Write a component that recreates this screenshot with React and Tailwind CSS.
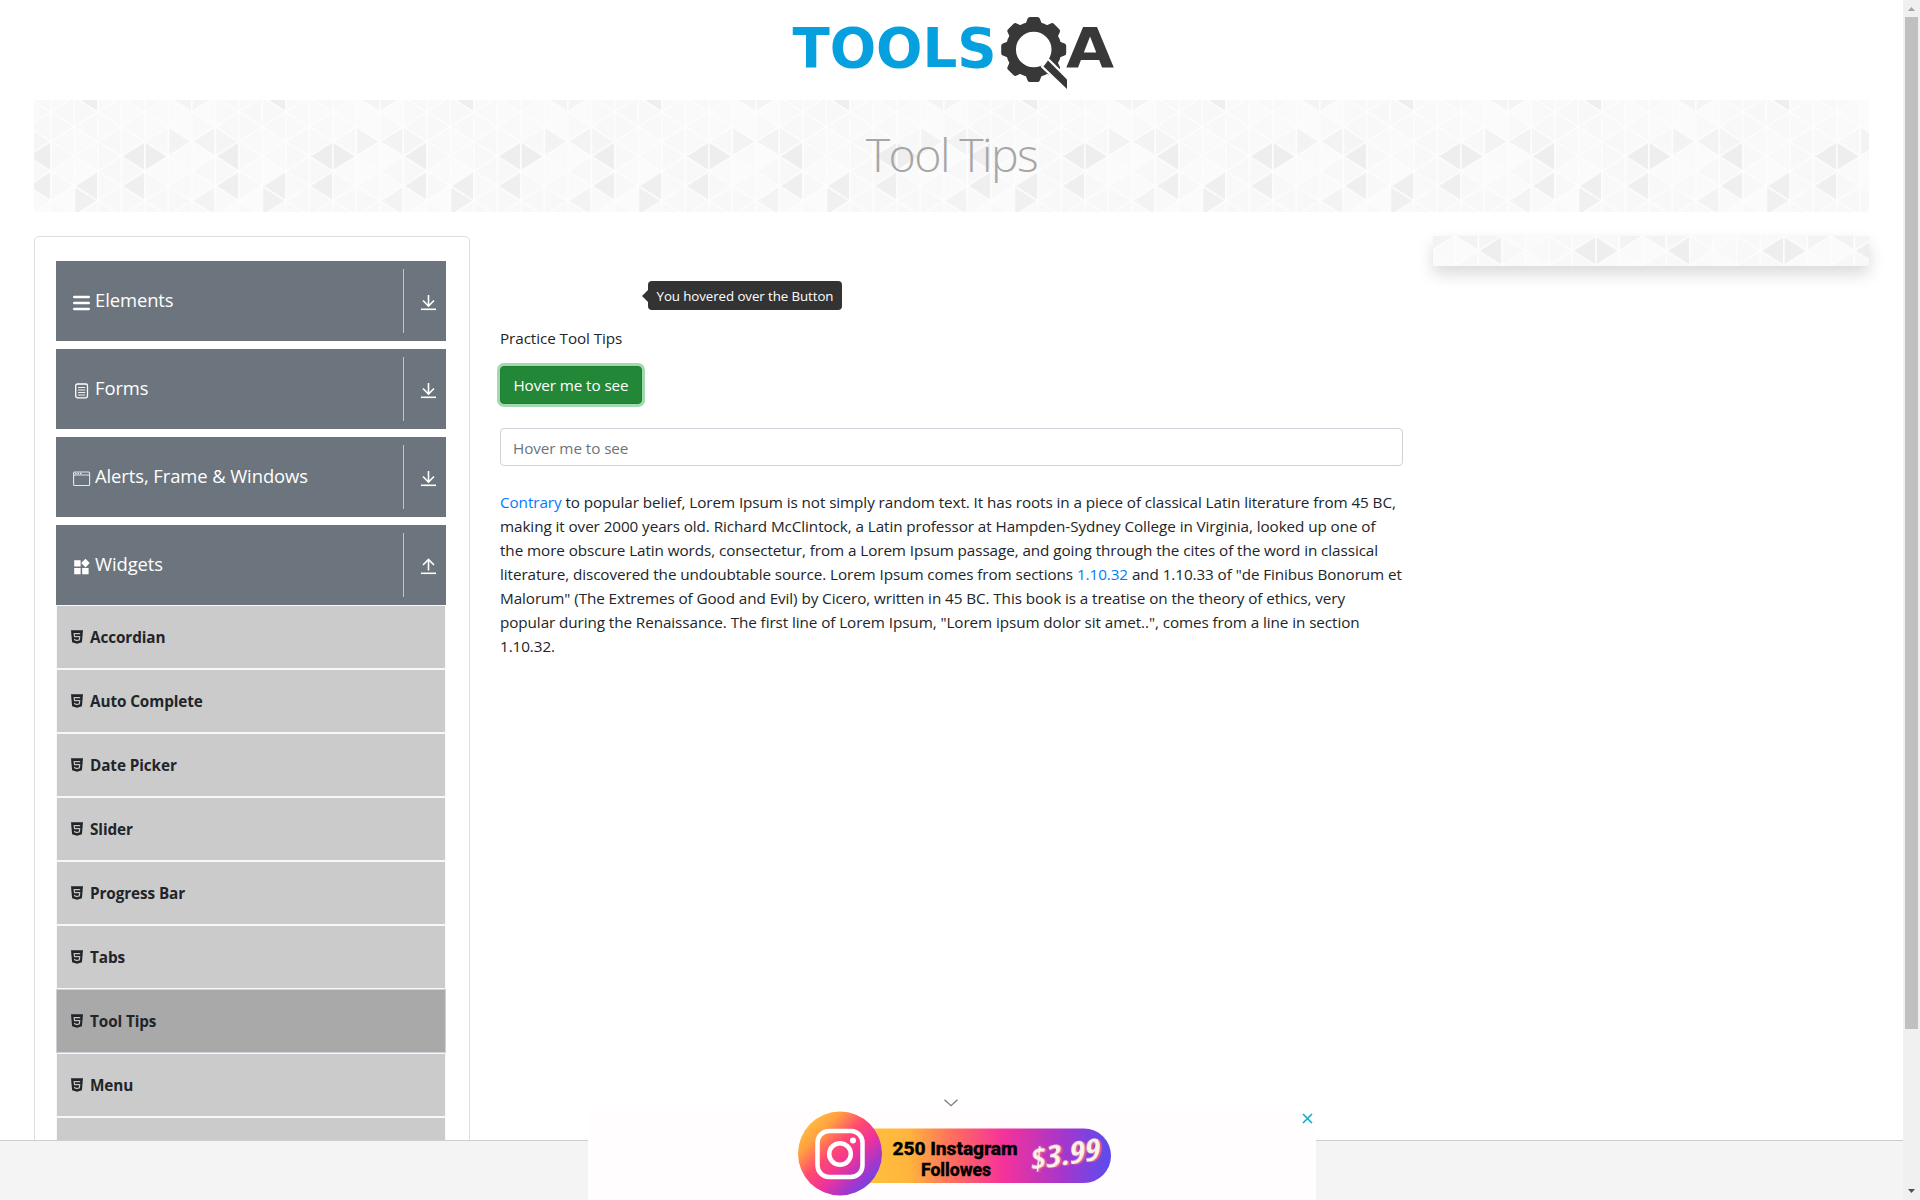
import React from "react";

const STEP = 23.5;
const HALF = 14.83;

// Darker triangles of the backdrop: [base column, centre y, pointing side, fill]
const DARK = [
  [0, 56.3, "L", "#eeeeee"], [4, 56.3, "L", "#eeeeee"], [4, 56.3, "R", "#eeeeee"],
  [0, 86, "L", "#efefef"], [2, 86, "L", "#efefef"], [4, 86, "L", "#efefef"],
  [1, 100.8, "R", "#f0f0f0"], [2, -3, "L", "#eeeeee"], [5, 41.5, "R", "#f3f3f3"],
  [7, 41.5, "L", "#f3f3f3"], [7, 41.5, "R", "#f5f5f5"], [7, 100.8, "L", "#f3f3f3"],
  [6, -3, "L", "#f4f4f4"], [6, -3, "R", "#f4f4f4"],
];
const SOFT = ["#f8f8f8", "#fafafa", "#f9f9f9", "#f8f8f8", "#f9f9f9", "#fbfbfb", "#f8f8f8"];

function buildTriangles() {
  const list = [];
  for (let c = -1; c <= 8; c++) {
    for (let r = -1; r < 5; r++) {
      const col = (c + 8) % 8;
      const cy = (col % 2 ? 11.8 : 26.7) + r * HALF * 2;
      const x = 16.9 + c * STEP;
      for (const side of ["L", "R"]) {
        const hit = DARK.find((d) => d[0] === col && Math.abs(d[1] - cy) < 5 && d[2] === side);
        const soft = SOFT[(col * 5 + (r + 1) * 3 + (side === "L" ? 0 : 4) + ((col * (r + 2)) % 3)) % SOFT.length];
        const tip = side === "L" ? x - STEP : x + STEP;
        list.push({
          key: c + "," + r + side,
          points: `${x},${cy - HALF} ${x},${cy + HALF} ${tip},${cy}`,
          fill: hit ? hit[3] : soft,
        });
      }
    }
  }
  return list;
}
const TRIANGLES = buildTriangles();

function Backdrop({ id, dx, dy }) {
  return (
    <svg className="absolute inset-0 h-full w-full" aria-hidden="true">
      <defs>
        <pattern id={id} width="188" height="118.64" patternUnits="userSpaceOnUse" patternTransform={`translate(${dx} ${dy})`}>
          <rect width="188" height="119" fill="#f9f9f9" />
          {TRIANGLES.map((t) => (
            <polygon key={t.key} points={t.points} fill={t.fill} stroke="#fdfdfd" strokeWidth="1.600" />
          ))}
        </pattern>
      </defs>
      <rect width="100%" height="100%" fill={`url(#${id})`} />
    </svg>
  );
}

function Logo() {
  return (
    <svg width="330" height="84" viewBox="787 8 330 84" aria-label="TOOLSQA">
      <text x="792.500" y="67" textLength="204" lengthAdjust="spacingAndGlyphs" fill="#06a0de" className="text-[56px] font-bold [font-family:'DejaVu_Sans',sans-serif]">TOOLS</text>
      <g fill="#383838">
        {[0, 45, 90, 135, 180, 225, 270, 315].map((a) => (
          <path key={a} d="M1024.500 27 L1027.600 18.600 Q1028.200 17 1030 17 H1037.400 Q1039.200 17 1039.800 18.600 L1043 27 Z" transform={`rotate(${a} 1033.700 49.500)`} />
        ))}
      </g>
      <circle cx="1033.700" cy="49.500" r="22.800" fill="#fff" stroke="#383838" strokeWidth="10" />
      <path d="M1048 60.500 L1067 79.500 V89 L1043.500 66.500 Z" fill="#383838" stroke="#fff" strokeWidth="4.500" paintOrder="stroke" />
      <text x="1066" y="67" textLength="48" lengthAdjust="spacingAndGlyphs" fill="#383838" className="text-[56px] font-bold [font-family:'DejaVu_Sans',sans-serif]">A</text>
    </svg>
  );
}

const ICON = "h-[19px] w-[19px] shrink-0";

function MenuIcon() {
  return (
    <svg className={ICON} viewBox="0 0 19 19" stroke="#fff" strokeWidth="2.600" strokeLinecap="round">
      <path d="M2.300 3H16.700M2.300 9H16.700M2.300 15H16.700" />
    </svg>
  );
}
function FormIcon() {
  return (
    <svg className={ICON} viewBox="0 0 19 19" fill="none" stroke="#fff">
      <rect x="3.700" y="2" width="11.800" height="13.800" rx="1.700" strokeWidth="1.300" />
      <path d="M6 5.500H13.200M6 8H13.200M6 10.500H13.200M6 13H13.200" strokeWidth="0.900" />
    </svg>
  );
}
function WindowIcon() {
  return (
    <svg className={ICON} viewBox="0 0 19 19" fill="none" stroke="#e4e6e8">
      <rect x="1.600" y="2" width="16" height="13.500" rx="1" strokeWidth="1.100" />
      <path d="M1.600 5H17.600" strokeWidth="1" />
      <path d="M3 3.500H9.500" strokeWidth="1.500" strokeDasharray="1.500 1" />
    </svg>
  );
}
function WidgetIcon() {
  return (
    <svg className={ICON} viewBox="0 0 19 19" fill="#fff">
      <path d="M2.200 2.200h6.400v6.300H2.200zM2.200 9.900h6.400v6.300H2.200zM10.200 9.900h6.400v6.300h-6.400zM13.500 0.800l4.200 4.300-4.200 4.300-4.300-4.300z" />
    </svg>
  );
}
function ArrowIcon({ up }) {
  return (
    <svg width="17" height="17" viewBox="0 0 17 17" fill="none" stroke="#fff" strokeWidth="1.600">
      <path d="M1 15.300H16" />
      {up ? <path d="M8.500 12.500V1.800M3 7L8.500 1.500L14 7" /> : <path d="M8.500 1V11.800M3 6.500L8.500 12L14 6.500" />}
    </svg>
  );
}
function Html5Icon() {
  return (
    <svg width="14" height="14" viewBox="0 0 14 14" className="shrink-0">
      <path d="M1 0.300H13L11.900 12.300L7 13.700L2.100 12.300Z" fill="#212529" />
      <path d="M10.200 3.600H4.200L4.500 6.700H9.700L9.400 9.900L7 10.600L4.700 9.900L4.600 8.900" fill="none" stroke="#c4c4c4" strokeWidth="1.200" />
    </svg>
  );
}

const GROUPS = [
  { label: "Elements", Icon: MenuIcon },
  { label: "Forms", Icon: FormIcon },
  { label: "Alerts, Frame & Windows", Icon: WindowIcon },
  { label: "Widgets", Icon: WidgetIcon, open: true },
];
const ITEMS = ["Accordian", "Auto Complete", "Date Picker", "Slider", "Progress Bar", "Tabs", "Tool Tips", "Menu", "Select Menu"];

function Sidebar() {
  return (
    <aside className="h-[1100px] w-[436px] shrink-0 rounded-[5px] border border-[#dfdfdf] pt-6 pr-[23px] pl-[21px]">
      <div className="flex flex-col gap-2">
        {GROUPS.map(({ label, Icon, open }) => (
          <div key={label} className="flex h-20 bg-[#6c757d] py-2 text-white">
            <div className="flex flex-1 items-center gap-1 pl-4">
              <span className="pt-[5px]"><Icon /></span>
              <span className="pb-0.5 text-[18.4px] leading-7">{label}</span>
            </div>
            <div className="flex w-[43px] items-center justify-center border-l border-[#bfc3c7] pt-[3px] pl-[7px]">
              <ArrowIcon up={open} />
            </div>
          </div>
        ))}
      </div>
      <ul className="text-[15.3px] font-bold tracking-[-0.1px]">
        {ITEMS.map((item) => (
          <li
            key={item}
            className={
              item === "Tool Tips"
                ? "flex h-16 items-center gap-1.5 border border-[#ccd2d8] bg-[#a9a9a9] pl-[13px]"
                : "flex h-16 items-center gap-1.5 border border-[#f6f8fa] bg-[#cbcbcb] pl-[13px]"
            }
          >
            <Html5Icon />
            <span className="pt-px">{item}</span>
          </li>
        ))}
      </ul>
    </aside>
  );
}

function Main() {
  return (
    <main className="ml-[30px] w-[903px] shrink-0 pt-[90px]">
      <p className="h-10 leading-6">Practice Tool Tips</p>
      <div className="relative flex">
        <button className="h-[38px] w-[142px] rounded border border-[#1e7e34] bg-[#228838] pt-px text-white ring-3 ring-[#a3d9b0]">Hover me to see</button>
        <div className="absolute -top-[85px] left-[142px] flex items-center text-[13.3px] text-white">
          <svg width="6" height="12" viewBox="0 0 6 12"><path d="M6 0L0 6L6 12Z" fill="#333" /></svg>
          <div className="flex h-[29px] w-[194px] items-center justify-center rounded bg-[#333] pt-0.5 whitespace-nowrap">You hovered over the Button</div>
        </div>
      </div>
      <input className="mt-6 h-[38px] w-full rounded border border-[#ced4da] px-3 pt-px tracking-[-0.07px] placeholder:text-[#6c757d]" placeholder="Hover me to see" />
      <p className="mt-6 leading-6 whitespace-nowrap">
        <a className="text-[#007bff]">Contrary</a> to popular belief, Lorem Ipsum is not simply random text. It has roots in a piece of classical Latin literature from 45 BC,<br />
        making it over 2000 years old. Richard McClintock, a Latin professor at Hampden-Sydney College in Virginia, looked up one of<br />
        the more obscure Latin words, consectetur, from a Lorem Ipsum passage, and going through the cites of the word in classical<br />
        literature, discovered the undoubtable source. Lorem Ipsum comes from sections <a className="text-[#007bff]">1.10.32</a> and 1.10.33 of "de Finibus Bonorum et<br />
        Malorum" (The Extremes of Good and Evil) by Cicero, written in 45 BC. This book is a treatise on the theory of ethics, very<br />
        popular during the Renaissance. The first line of Lorem Ipsum, "Lorem ipsum dolor sit amet..", comes from a line in section<br />
        1.10.32.
      </p>
    </main>
  );
}

function Ad() {
  return (
    <div className="absolute bottom-0 left-[588px] h-[90px] w-[728px] bg-[#fffdfd]">
      <svg className="absolute -top-[11px] left-[356px]" width="14" height="8" viewBox="0 0 14 8" fill="none" stroke="#777" strokeWidth="1.200"><path d="M0.500 0.800L7 6.800L13.500 0.800" /></svg>
      <svg className="absolute top-[3px] right-[3px]" width="11" height="11" viewBox="0 0 11 11" stroke="#00aecd" strokeWidth="1.500"><path d="M1 1L10 10M10 1L1 10" /></svg>
      <svg width="728" height="90" viewBox="0 0 728 90">
        <defs>
          <linearGradient id="pill" x1="0" x2="1">
            <stop offset="0" stopColor="#ffc83c" /><stop offset="0.25" stopColor="#ffb43c" /><stop offset="0.42" stopColor="#ff6a60" />
            <stop offset="0.6" stopColor="#f5329a" /><stop offset="0.82" stopColor="#a636cc" /><stop offset="1" stopColor="#5a4cf0" />
          </linearGradient>
          <linearGradient id="disc" x1="0.1" y1="0.1" x2="0.9" y2="0.9">
            <stop offset="0" stopColor="#ffc440" /><stop offset="0.2" stopColor="#ffa040" /><stop offset="0.42" stopColor="#ff4a70" />
            <stop offset="0.62" stopColor="#f0329a" /><stop offset="0.82" stopColor="#a636cc" /><stop offset="1" stopColor="#6048e8" />
          </linearGradient>
        </defs>
        <rect x="254" y="18.500" width="269" height="54.500" rx="27" fill="url(#pill)" />
        <circle cx="252" cy="43.500" r="42" fill="url(#disc)" />
        <g fill="none" stroke="#fff">
          <rect x="229.500" y="21" width="45" height="46" rx="11.500" strokeWidth="4.500" />
          <circle cx="252" cy="44" r="10.800" strokeWidth="4.500" />
        </g>
        <circle cx="265" cy="30.500" r="3" fill="#fff" />
        <g className="text-[18px] font-extrabold [font-family:Roboto,sans-serif]" stroke="#000" strokeWidth="0.300">
          <text x="304.500" y="44.500" textLength="125" lengthAdjust="spacingAndGlyphs">250 Instagram</text>
          <text x="333" y="65.800" textLength="70" lengthAdjust="spacingAndGlyphs">Followes</text>
        </g>
        <text transform="rotate(-9 478 45)" x="442" y="55" textLength="71" lengthAdjust="spacingAndGlyphs" fill="#fbf3ea" className="text-[31px] font-bold italic drop-shadow-[2px_1.5px_0_#e2557f] [font-family:'Open_Sans',sans-serif] [font-stretch:75%]">$3.99</text>
      </svg>
    </div>
  );
}

export default function App() {
  return (
    <div className="relative flex h-[1200px] w-[1920px] overflow-hidden bg-white text-[15.25px] tracking-[-0.08px] text-[#212529] [font-family:'Open_Sans','Noto_Sans',sans-serif]">
      <div className="flex w-[1903px] shrink-0 flex-col pr-[34px] pl-[34px]">
        <header className="flex h-[100px] shrink-0 justify-center pt-2"><Logo /></header>
        <div className="relative flex h-28 shrink-0 justify-center overflow-hidden">
          <Backdrop id="bannerPattern" dx={0} dy={0} />
          <h1 className="relative pt-[18px] text-[46.5px] leading-[72px] font-light tracking-[-1.6px] text-[#a6a6a6]">Tool Tips</h1>
        </div>
        <div className="mt-6 flex">
          <Sidebar />
          <Main />
          <div className="relative ml-[30px] h-[30px] flex-1 shadow-[0_8px_16px_rgba(0,0,0,0.15)]">
            <Backdrop id="stripPattern" dx={52} dy={-41.5} />
          </div>
        </div>
      </div>

      <div className="flex h-full w-[17px] shrink-0 flex-col items-center bg-[#f0f0f0]">
        <svg width="17" height="17" viewBox="0 0 17 17"><path d="M5 11L8.500 7L12 11Z" fill="#a3a3a3" /></svg>
        <div className="h-[1012px] w-[13px] bg-[#c0c0c0]" />
        <svg className="mt-auto" width="17" height="17" viewBox="0 0 17 17"><path d="M5 6L8.500 10L12 6Z" fill="#505050" /></svg>
      </div>

      <footer className="absolute bottom-0 left-0 h-[60px] w-[1903px] border-t border-[#ccc] bg-[#f4f4f4]" />
      <Ad />
    </div>
  );
}
